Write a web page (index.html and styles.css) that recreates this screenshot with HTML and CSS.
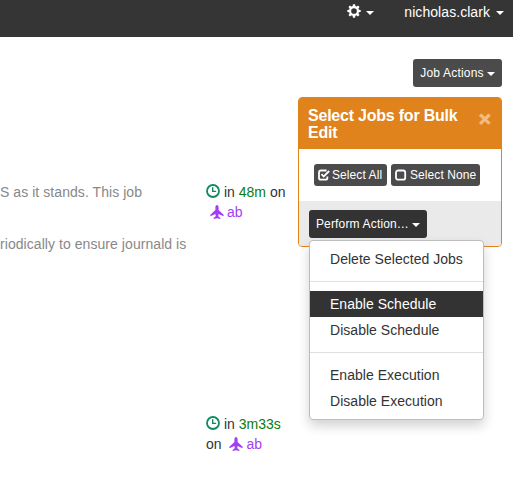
FILE: index.html
```html
<!DOCTYPE html>
<html lang="en">
<head>
<meta charset="utf-8">
<title>Jobs</title>
<link rel="stylesheet" href="styles.css">
</head>
<body>
<svg class="symbols" aria-hidden="true">
  <symbol id="clock" viewBox="0 0 14 14"><circle cx="7" cy="7" r="6" fill="none" stroke="currentColor" stroke-width="1.8"/><path d="M6.7 3.2V7.4H10.2" fill="none" stroke="currentColor" stroke-width="1.4"/></symbol>
  <symbol id="plane" viewBox="0 0 14 14"><path d="M7 0C7.9 0 8.6 1.1 8.6 2.3V5L13.6 9.8V11.2L8.5 9L8.3 11.2L10.4 13V14L7 13.2L3.6 14V13L5.7 11.2L5.5 9L.4 11.2V9.8L5.4 5V2.3C5.4 1.1 6.1 0 7 0Z" fill="currentColor"/></symbol>
</svg>
<nav class="navbar">
  <a class="nav-gear"><svg class="gear" viewBox="0 0 14 14"><g fill="currentColor"><path id="tooth" d="M5.9 .3H8.1L8.6 3.5H5.4ZM5.9 13.7H8.1L8.6 10.5H5.4Z"/><use href="#tooth" transform="rotate(45 7 7)"/><use href="#tooth" transform="rotate(90 7 7)"/><use href="#tooth" transform="rotate(135 7 7)"/></g><circle cx="7" cy="7" r="3.9" fill="none" stroke="currentColor" stroke-width="2.1"/></svg><i class="caret"></i></a>
  <a class="nav-user"><span>nicholas.clark</span><i class="caret"></i></a>
</nav>
<main class="content">
  <section class="descriptions">
    <p class="first">S as it stands. This job</p>
    <p>riodically to ensure journald is</p>
  </section>
  <section class="schedules">
    <div class="schedule"><svg class="icon clock"><use href="#clock"/></svg><span class="in">in</span> <span class="time">48m</span> on<br><span class="node"><svg class="icon plane"><use href="#plane"/></svg><span class="name">ab</span></span></div>
    <div class="schedule later"><svg class="icon clock"><use href="#clock"/></svg><span class="in">in</span> <span class="time">3m33s</span><br>on <span class="node"><svg class="icon plane"><use href="#plane"/></svg><span class="name">ab</span></span></div>
  </section>
  <aside class="side">
    <button class="btn job-actions"><span>Job Actions</span><i class="caret"></i></button>
    <div class="panel">
      <header class="panel-head"><h4>Select Jobs for Bulk<br>Edit</h4><span class="close">×</span></header>
      <div class="panel-body">
        <button class="btn btn-xs all"><svg class="check" viewBox="0 0 12 12"><path d="M8.6 1.5H3Q1 1.5 1 3.5V8.7Q1 10.7 3 10.7H7.4Q9.4 10.7 9.4 8.7V7.4M3.4 5.2L5.7 7.5L11.2 2" fill="none" stroke="currentColor" stroke-width="1.8"/></svg><span>Select All</span></button>
        <button class="btn btn-xs none"><svg class="check" viewBox="0 0 12 12"><rect x="1" y="1.5" width="9.2" height="9.2" rx="2" fill="none" stroke="currentColor" stroke-width="1.8"/></svg><span>Select None</span></button>
      </div>
      <footer class="panel-foot">
        <button class="btn perform"><span>Perform Action…</span><i class="caret"></i></button>
        <ul class="menu">
          <li>Delete Selected Jobs</li>
          <li class="divider"></li>
          <li class="active">Enable Schedule</li>
          <li>Disable Schedule</li>
          <li class="divider"></li>
          <li>Enable Execution</li>
          <li>Disable Execution</li>
        </ul>
      </footer>
    </div>
  </aside>
</main>
</body>
</html>
```

FILE: styles.css
```css
* { box-sizing: border-box; }
body { margin: 0; height: 496px; overflow: hidden; background: #fff; color: #333; font: 14px/20px "Liberation Sans", Arial, sans-serif; }
.symbols { position: absolute; width: 0; height: 0; }
.navbar { height: 37px; background: #353535; color: #fff; display: flex; justify-content: flex-end; padding: 1px 9px 0 0; }
.nav-gear, .nav-user { display: flex; align-items: center; height: 21px; }
.nav-gear { margin-right: 30px; }
.gear { width: 14px; height: 14px; margin-right: 5px; margin-top: -1px; }
.caret { display: block; border: 4px solid transparent; border-top-color: currentColor; border-bottom: 0; flex: none; }
.nav-gear .caret, .nav-user .caret { margin-top: 2px; }
.nav-user .caret { margin-left: 6px; }
.nav-user span { letter-spacing: .06px; }
.content { display: grid; grid-template-columns: 206px 92px 204px; }
.descriptions { padding-top: 145px; color: #888; white-space: nowrap; letter-spacing: .06px; }
.descriptions p { margin: 0; }
.descriptions .first { margin-bottom: 32px; }
.schedules { padding-top: 145px; white-space: nowrap; }
.schedule { height: 40px; }
.later { margin-top: 192px; }
.icon { width: 14px; height: 14px; display: inline-block; }
.clock { color: #118a63; vertical-align: -1px; margin-right: 4px; }
.plane { vertical-align: -2px; margin: 0 3px 0 4px; }
.time { color: #0a7d0a; }
.node { color: #a23ef5; }
.side { padding-top: 22px; display: flex; flex-direction: column; align-items: flex-end; }
.btn { border: 0; border-radius: 3px; background: #4b4b4b; color: #fff; font: 12px/18px "Liberation Sans", Arial, sans-serif; display: flex; align-items: center; padding: 0; white-space: nowrap; }
.btn .caret { margin-top: 2px; }
.job-actions { width: 89px; height: 28px; justify-content: center; gap: 3px; letter-spacing: .2px; }
.panel { width: 204px; height: 150px; margin-top: 10px; border: 1px solid #e0831d; border-radius: 4px; background: #fff; }
.panel-head { height: 51px; background: #e0831d; color: #fff; display: flex; justify-content: space-between; padding: 9px 10px 0 9px; border-radius: 2px 2px 0 0; }
.panel-head h4 { margin: 0; font-size: 16px; line-height: 17px; font-weight: bold; letter-spacing: -.22px; white-space: nowrap; }
.close { color: #f1bd83; font-size: 21px; line-height: 23px; font-weight: bold; -webkit-text-stroke: .8px #f1bd83; }
.panel-body { height: 52px; display: flex; gap: 4px; padding: 15px; }
.btn-xs { height: 22px; gap: 2px; padding-left: 4px; letter-spacing: .08px; }
.all { width: 73px; }
.none { width: 89px; }
.check { width: 12px; height: 12px; flex: none; margin-top: -1px; }
.none .check { margin-right: 1px; }
.panel-foot { height: 45px; background: #eaeaea; padding: 9px 10px; position: relative; border-radius: 0 0 3px 3px; }
.perform { width: 118px; height: 28px; background: #333; justify-content: center; gap: 3px; letter-spacing: .16px; }
.menu { position: absolute; left: 10px; top: 39px; width: 175px; height: 180px; margin: 0; padding: 5px 0; list-style: none; background: #fff; border: 1px solid #bdbdbd; border-radius: 4px; box-shadow: 0 6px 12px rgba(0, 0, 0, .175); }
.menu li { height: 26px; line-height: 26px; padding-left: 20px; white-space: nowrap; letter-spacing: .03px; }
.menu .active { background: #333; color: #fff; }
.menu .divider { height: 1px; margin: 9px 0; background: #e0e0e0; padding: 0; }
```
